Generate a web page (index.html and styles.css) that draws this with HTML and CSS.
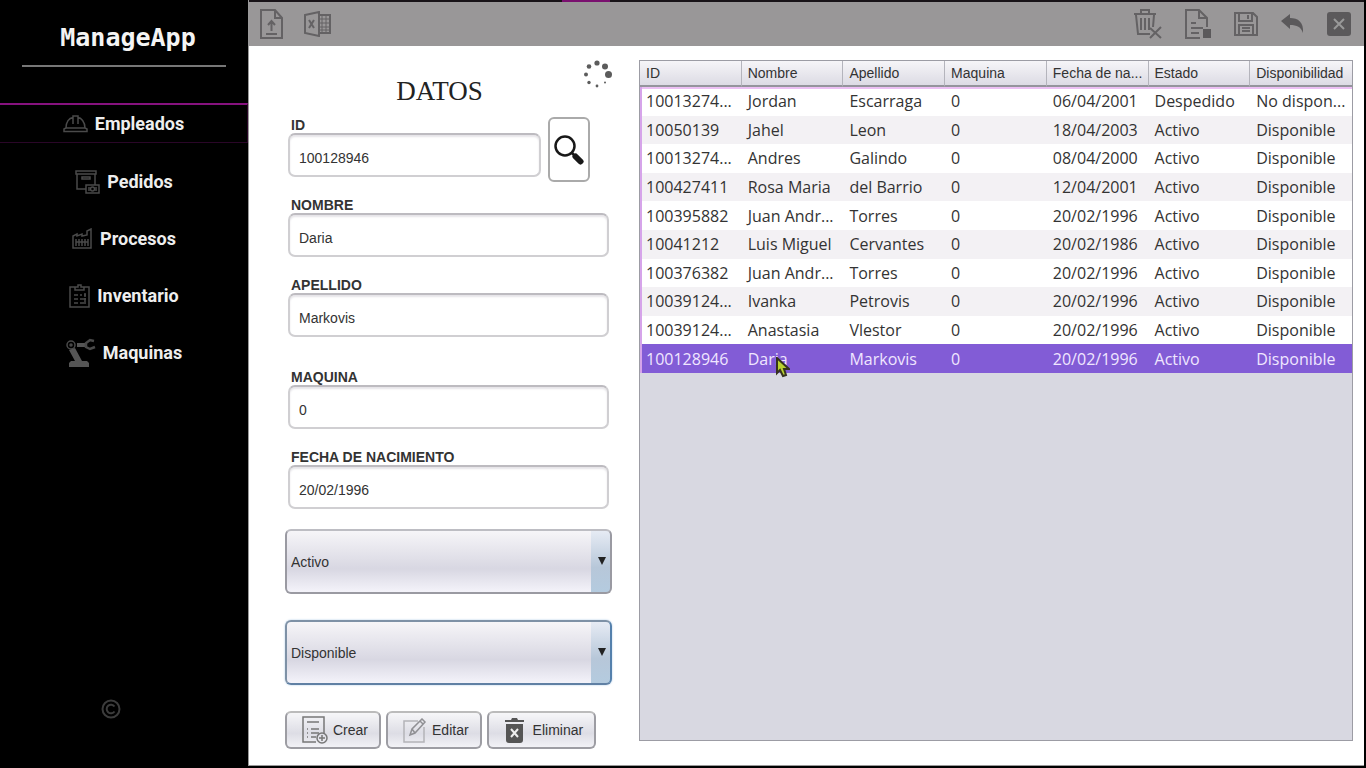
FILE: index.html
```html
<!DOCTYPE html>
<html lang="es">
<head>
<meta charset="utf-8">
<title>ManageApp</title>
<link rel="stylesheet" href="styles.css">
</head>
<body>
<div class="app">
  <aside class="sidebar">
    <div class="brand">ManageApp</div>
    <nav class="nav">
      <a class="nav-item active" href="#empleados">
        <svg width="25" height="18" viewBox="0 0 25 18"><path d="M1 16.500h23v-2.500l-2-1C22 7 18 2.500 15 2.500V1h-5v1.500C6 3 3 7 3 13l-2 1zM3 13h19M10 2.500V9M15 2.500V9"/></svg>
        <span>Empleados</span></a>
      <a class="nav-item" href="#pedidos">
        <svg width="25" height="24" viewBox="0 0 25 24"><path d="M1 1h20v3H1zM2 4v15h9M20 4v11M7 7h8v2H7zM11 15h13v8H11zM14 17v4M21 17v4"/><circle cx="17.500" cy="19" r="2"/></svg>
        <span>Pedidos</span></a>
      <a class="nav-item" href="#procesos">
        <svg width="21" height="21" viewBox="0 0 21 21"><path d="M1 20V8l4-2v2l5-2v2l5-1V3l4-2v19zM4 11v7M7 11v7M10 11v7M13 11v7M16 11v7M4 14h12"/></svg>
        <span>Procesos</span></a>
      <a class="nav-item" href="#inventario">
        <svg width="21" height="24" viewBox="0 0 21 24"><path d="M6 3H1v20h19V3h-5M6 6V3h3V1h3v2h3v3zM5 11h4M11 11h2M15 11h2M5 15h4M11 15h6M5 19h4M11 19h6M16 9v4M16 14v4"/></svg>
        <span>Inventario</span></a>
      <a class="nav-item" href="#maquinas">
        <svg width="30" height="29" viewBox="0 0 30 29"><circle cx="5" cy="7" r="4"/><circle cx="5" cy="7" r="1"/><path class="fill" d="M3 12l6-2 7 13h5l2 2v4H3v-4l2-2h4zM11 5h9v4h-9z"/><path class="thick" d="M29 9l-5 2-4-2V5l4-3 4 1"/></svg>
        <span>Maquinas</span></a>
    </nav>
    <div class="copyright"><svg width="20" height="20" viewBox="0 0 20 20" aria-label="Copyright"><circle cx="10" cy="10" r="8.500"/><path d="M13.500 7.500a4.300 4.300 0 1 0 0 5"/></svg></div>
  </aside>

  <main class="main">
    <header class="toolbar">
      <div class="tools tools-left">
        <button aria-label="Importar"><svg width="23" height="30" viewBox="0 0 23 30"><path d="M1 1h14l7 8v20H1zM15 1v8h7M6 25h11M11.500 22v-9M8 16l3.500-4 3.500 4"/></svg></button>
        <button aria-label="Exportar a Excel"><svg width="27" height="26" viewBox="0 0 27 26"><path d="M1 4l14-3v24L1 22zM15 4h11v18H15M5 9l5 8M10 9l-5 8"/><path class="thin" d="M18 4v18M22 4v18M16 8h10M16 12h10M16 16h10M16 19h10"/></svg></button>
      </div>
      <div class="tools tools-right">
        <button aria-label="Vaciar"><svg width="28" height="30" viewBox="0 0 28 30"><path d="M0 5h22M7 5V1h8v4M2 6l2 19h12M20 6l-1 12M7 9v12M11 9v12M15 9v12M16 19l11 10M27 18L16 29"/></svg></button>
        <button aria-label="Reporte"><svg width="26" height="30" viewBox="0 0 26 30"><path d="M15 29H1V1h13l8 8v9M14 1v8h8M6 14h5M6 19h12M6 24h8"/><path class="solid" d="M18 20h8v9h-8z"/></svg></button>
        <button aria-label="Guardar"><svg width="24" height="24" viewBox="0 0 24 24"><path d="M1 1h18l4 4v18H1zM5 1v8h13V1M14 3v4M5 23V13h14v10M8 16h8M8 19h8"/></svg></button>
        <button aria-label="Deshacer"><svg width="23" height="20" viewBox="0 0 23 20"><path class="solid" d="M0 7l9-7v4c8 0 14 4 13 15-2-6-6-8-13-8v4z"/></svg></button>
        <button aria-label="Cerrar"><svg width="24" height="24" viewBox="0 0 24 24"><rect class="solid" width="24" height="24" rx="3"/><path class="cross" d="M7 7l10 10M17 7L7 17"/></svg></button>
      </div>
    </header>

    <div class="content">
      <form class="form">
        <div class="form-head">
          <h1>DATOS</h1>
          <svg class="spinner" width="28" height="28" viewBox="0 0 28 28"><circle cx="13" cy="3" r="2.600"/><circle cx="21" cy="6.500" r="3"/><circle cx="24.500" cy="14.500" r="3.500"/><circle cx="21" cy="22.500" r="1"/><circle cx="13" cy="26" r="1.400"/><circle cx="5" cy="22.500" r="1.700"/><circle cx="2" cy="14.500" r="2"/><circle cx="5" cy="6.500" r="2.300"/></svg>
        </div>
        <div class="id-row">
          <div class="field"><label for="id">ID</label><input id="id" type="text" value="100128946"></div>
          <button class="search" type="button" aria-label="Buscar"><svg width="30" height="30" viewBox="0 0 30 30"><circle cx="11" cy="11" r="9.500"/><path d="M17.500 17.500l4 4"/><path class="handle" d="M21.500 21.500l5 5"/></svg></button>
        </div>
        <div class="field"><label for="nombre">NOMBRE</label><input id="nombre" type="text" value="Daria"></div>
        <div class="field"><label for="apellido">APELLIDO</label><input id="apellido" type="text" value="Markovis"></div>
        <div class="field spaced"><label for="maquina">MAQUINA</label><input id="maquina" type="text" value="0"></div>
        <div class="field"><label for="fecha">FECHA DE NACIMIENTO</label><input id="fecha" type="text" value="20/02/1996"></div>
        <div class="combo"><select aria-label="Estado"><option>Activo</option><option>Despedido</option></select><svg width="10" height="8" viewBox="0 0 10 8"><path d="M1 0h8L5 8z"/></svg></div>
        <div class="combo focused"><select aria-label="Disponibilidad"><option>Disponible</option><option>No disponible</option></select><svg width="10" height="8" viewBox="0 0 10 8"><path d="M1 0h8L5 8z"/></svg></div>
        <div class="actions">
          <button type="button" class="create"><svg width="26" height="28" viewBox="0 0 26 28"><path d="M14 26H1V1h21v17M5 6h12M5 13h1M9 13h8M5 17h1M9 17h8M5 21h1M9 21h5"/><circle cx="20" cy="22" r="5"/><path d="M17 22h6M20 19v6"/></svg>Crear</button>
          <button type="button" class="edit"><svg width="24" height="25" viewBox="0 0 24 25"><path class="pale" d="M15 3H1v21h20V9"/><path d="M7 17l2-6L19 1l3 3-10 11zM17 3l3 3M9 11l3 4"/></svg>Editar</button>
          <button type="button" class="delete"><svg width="19" height="25" viewBox="0 0 19 25"><path class="bin" d="M0 2h6l1-2h5l1 2h6v2H0zM1 6h17v16q0 3-3 3H4q-3 0-3-3z"/><path class="mark" d="M6 11l7 8M13 11l-7 8"/></svg>Eliminar</button>
        </div>
      </form>

      <section class="table-pane">
        <table>
          <thead><tr><th>ID</th><th>Nombre</th><th>Apellido</th><th>Maquina</th><th>Fecha de na...</th><th>Estado</th><th>Disponibilidad</th></tr></thead>
          <tbody>
            <tr><td>10013274...</td><td>Jordan</td><td>Escarraga</td><td>0</td><td>06/04/2001</td><td>Despedido</td><td>No dispon...</td></tr>
            <tr><td>10050139</td><td>Jahel</td><td>Leon</td><td>0</td><td>18/04/2003</td><td>Activo</td><td>Disponible</td></tr>
            <tr><td>10013274...</td><td>Andres</td><td>Galindo</td><td>0</td><td>08/04/2000</td><td>Activo</td><td>Disponible</td></tr>
            <tr><td>100427411</td><td>Rosa Maria</td><td>del Barrio</td><td>0</td><td>12/04/2001</td><td>Activo</td><td>Disponible</td></tr>
            <tr><td>100395882</td><td>Juan Andr...</td><td>Torres</td><td>0</td><td>20/02/1996</td><td>Activo</td><td>Disponible</td></tr>
            <tr><td>10041212</td><td>Luis Miguel</td><td>Cervantes</td><td>0</td><td>20/02/1986</td><td>Activo</td><td>Disponible</td></tr>
            <tr><td>100376382</td><td>Juan Andr...</td><td>Torres</td><td>0</td><td>20/02/1996</td><td>Activo</td><td>Disponible</td></tr>
            <tr><td>10039124...</td><td>Ivanka</td><td>Petrovis</td><td>0</td><td>20/02/1996</td><td>Activo</td><td>Disponible</td></tr>
            <tr><td>10039124...</td><td>Anastasia</td><td>Vlestor</td><td>0</td><td>20/02/1996</td><td>Activo</td><td>Disponible</td></tr>
            <tr class="selected"><td>100128946</td><td class="pointed">Daria<svg class="cursor" width="14" height="21" viewBox="0 0 14 21"><path d="M1 1v15l3-3 3 6 3-1-2-6h5z"/></svg></td><td>Markovis</td><td>0</td><td>20/02/1996</td><td>Activo</td><td>Disponible</td></tr>
          </tbody>
        </table>
      </section>
    </div>
  </main>
</div>
</body>
</html>
```
FILE: styles.css
```css
* { box-sizing: border-box; }

body {
  margin: 0;
  background: #000;
  color: #333;
  font-family: "Liberation Sans", Arial, sans-serif;
  font-size: 14px;
}

button, input, select { font: inherit; color: inherit; }
button { display: flex; align-items: center; margin: 0; padding: 0; cursor: pointer; }
svg { display: block; flex: none; fill: none; }

.app {
  display: grid;
  grid-template-columns: 248px 1fr;
  min-height: 100vh;
  padding: 0 2px 2px 0;
}

/* Sidebar */
.sidebar { display: flex; flex-direction: column; background: #000; }

.brand {
  margin: 0 22px;
  padding-left: 8px;
  height: 67px;
  border-bottom: 2px solid #777;
  color: #f4f4f4;
  font: bold 25px/76px "DejaVu Sans Mono", monospace;
  text-align: center;
}

.nav { display: flex; flex-direction: column; gap: 17px; margin-top: 36px; }

.nav-item {
  display: flex;
  align-items: center;
  justify-content: center;
  gap: 7px;
  height: 40px;
  padding-top: 3px;
  color: #eee;
  font: bold 18px/24px Roboto, sans-serif;
  text-decoration: none;
}
.nav-item.active {
  padding-top: 1px;
  border: 1px solid #2a0628;
  border-top: 2px solid #86127f;
  border-left: 0;
}
.nav-item svg { stroke: #4a4a4a; stroke-width: 1.5; }
.nav-item .fill { fill: #555; stroke: none; }
.nav-item .thick { stroke-width: 2.5; }

.copyright { margin: auto 0 47px 101px; }
.copyright svg { stroke: #3c3c3c; stroke-width: 2; }

/* Main window */
.main {
  display: flex;
  flex-direction: column;
  min-width: 0;
  border: 1px solid #999;
  border-width: 0 0 1px 1px;
  background: #fff;
}

.toolbar {
  display: flex;
  align-items: center;
  justify-content: space-between;
  height: 46px;
  padding: 0 13px 0 11px;
  border-top: 2px solid #181318;
  border-image: linear-gradient(90deg, #181318 314px, #7a106f 314px, #7a106f 362px, #181318 362px) 2;
  background: #999798;
}
.tools { display: flex; align-items: center; }
.tools-left { gap: 21px; }
.tools-right { gap: 23px; }
.tools button { border: 0; background: none; }
.tools svg { stroke: #646264; stroke-width: 2; }
.tools .thin { stroke-width: 1; }
.tools .solid { fill: #5b595b; stroke: none; }
.tools .cross { stroke: #999; }

.content { display: grid; grid-template-columns: 390px 1fr; flex: 1; }

/* Form */
.form { display: flex; flex-direction: column; padding: 14px 27px 15px 36px; }

.form-head {
  display: grid;
  grid-template-columns: 1fr 28px;
  height: 57px;
  padding-left: 10px;
}
.form-head h1 {
  margin: 15px 0 0;
  color: #222;
  font: 27px/32px "Liberation Serif", serif;
  text-align: center;
}
.spinner { fill: #5c5c5c; }

.id-row { display: flex; gap: 4px; height: 65px; margin-bottom: 15px; padding-right: 22px; }
.id-row .field { flex: 1; margin-bottom: 0; }
.id-row input { padding-left: 10px; }

.search {
  justify-content: center;
  width: 42px;
  border: 2px solid #aaa;
  border-radius: 6px;
  background: #fff;
}
.search svg { stroke: #181818; stroke-width: 2.5; }
.search .handle { stroke-width: 6; stroke-linecap: round; }

.field { margin: 0 3px 20px; }
.field.spaced { margin-top: 12px; }
.field label {
  display: block;
  padding-left: 3px;
  font-weight: bold;
  line-height: 16px;
}
.field input {
  display: block;
  width: 100%;
  height: 44px;
  padding: 6px 9px 0;
  border: 2px solid #d0cfd2;
  border-top-color: #bdbbc0;
  border-radius: 7px;
  background: #fff;
  box-shadow: inset 0 2px 2px #e6e4e8;
}

.combo { position: relative; margin-bottom: 26px; }
.combo select {
  appearance: none;
  display: block;
  width: 100%;
  height: 65px;
  padding: 0 24px 0 4px;
  border: 2px solid #9a9aa2;
  border-top-color: #bdbdc3;
  border-radius: 6px;
  background:
    linear-gradient(#e6ebf4, #b7c7d9 60%, #b4cbdf) right / 19px 100% no-repeat,
    linear-gradient(#f6f5f8, #d8d7e2 62%, #f4f3fa);
}
.combo.focused select {
  border-color: #7e91a6;
  border-right-color: #5480ac;
  border-bottom-color: #6080a4;
  box-shadow: 0 0 2px #a4c4e4;
}
.combo svg { position: absolute; top: 28px; right: 5px; fill: #222; pointer-events: none; }

.actions { display: flex; gap: 5px; }
.actions button {
  gap: 5px;
  height: 38px;
  padding: 0 11px 0 15px;
  border: 2px solid #9d9da3;
  border-top-color: #bbb;
  border-radius: 6px;
  background: linear-gradient(#f6f6f8, #dddde5 60%, #f2f2f6);
}
.actions svg { stroke: #777; stroke-width: 1.5; }
.actions .edit svg { stroke: #909094; }
.actions .pale { stroke: #b4b4b8; }
.actions .delete { gap: 9px; padding-left: 16px; }
.actions .bin { fill: #555; stroke: none; }
.actions .mark { stroke: #eee; stroke-width: 2; }

/* Table */
.table-pane {
  margin: 14px 11px 24px 0;
  border: 1px solid #9c9ca4;
  background: #d8d8e1;
}
table {
  width: 100%;
  height: 312px;
  border-collapse: separate;
  border-spacing: 0;
  table-layout: fixed;
  white-space: nowrap;
}
thead tr { height: 26px; }
th {
  height: 26px;
  padding: 0 0 0 6px;
  border-bottom: 2px solid #94949c;
  border-right: 1px solid #b4b4bc;
  background: linear-gradient(#f6f5f8, #dcdbe4);
  font-weight: normal;
  text-align: left;
}
th:last-child { border-right: 0; }
td {
  padding: 0 0 0 6px;
  background: #fff;
  font: 16px/22px "Open Sans", "Noto Sans", sans-serif;
}
td:first-child { border-left: 2px solid #d6a4ea; padding-left: 4px; }
tbody tr:first-child td { box-shadow: inset 0 2px #ecc0f4; }
tbody tr:nth-child(even) td { background: #f3f1f4; }
tbody tr.selected td { background: #825cd6; color: #f0e6ff; }

.pointed { position: relative; }
.cursor { position: absolute; left: 34px; top: 13px; fill: #b9d130; stroke: #36321e; stroke-width: 2; }
```
